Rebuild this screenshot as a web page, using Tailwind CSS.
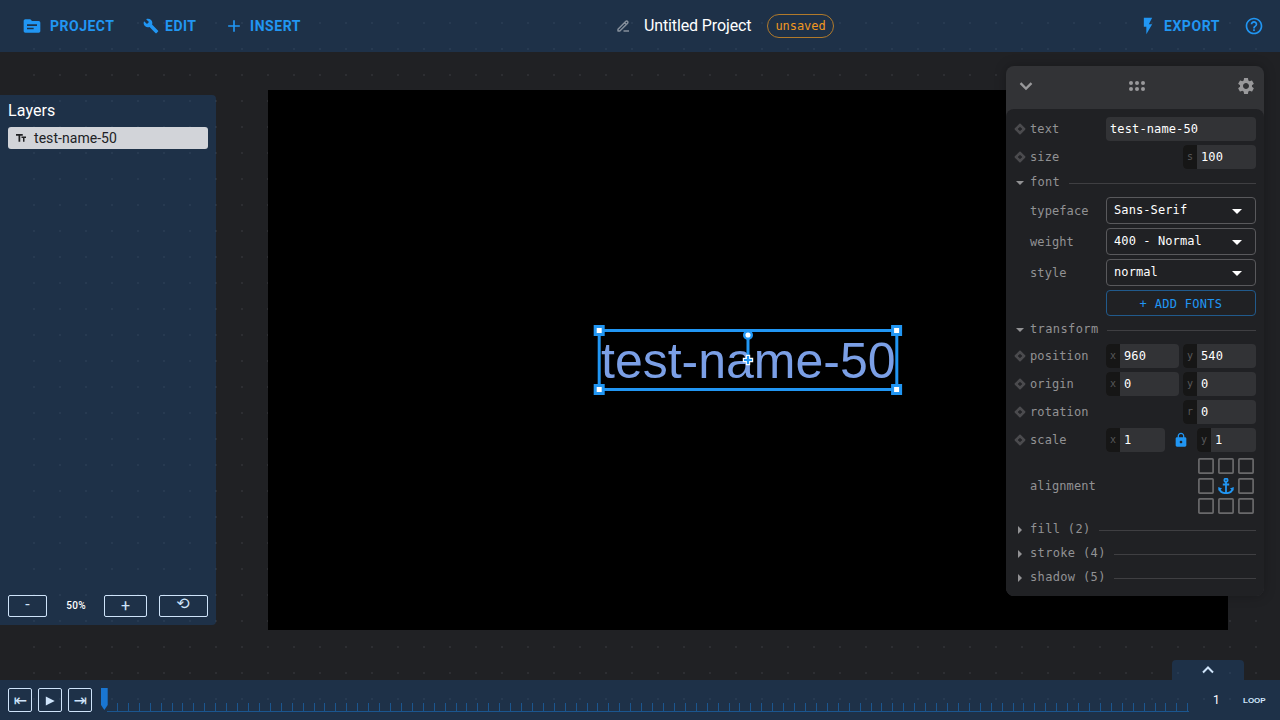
<!DOCTYPE html>
<html lang="en">
<head>
<meta charset="utf-8">
<title>Untitled Project</title>
<script src="https://cdn.jsdelivr.net/npm/@tailwindcss/browser@4"></script>
</head>
<body class="h-[720px] w-[1280px] overflow-hidden bg-[#202124] font-[Roboto,sans-serif] text-white">
<div class="relative flex h-full flex-col">
  <!-- dotted backdrop -->
  <svg class="pointer-events-none absolute inset-0" width="1280" height="720"><defs><pattern id="dots" x="33" y="22" width="26" height="26" patternUnits="userSpaceOnUse"><rect width="2" height="2" fill="#2d2e32"/></pattern></defs><rect x="30" y="0" width="1250" height="720" fill="url(#dots)"/></svg>
  <svg class="hidden">
    <symbol id="key" viewBox="0 0 12 12"><path d="M6 1.500L10.500 6 6 10.500 1.500 6z" fill="#4b4b4e" stroke="#4b4b4e" stroke-width="1.800" stroke-linejoin="round"/><path d="M6 4v4M4 6h4" stroke="#202124" stroke-width="1.300"/></symbol>
    <symbol id="slot" viewBox="0 0 16 16"><rect x=".9" y=".9" width="14.200" height="14.200" rx=".8" fill="none" stroke="#69696b" stroke-width="1.700"/></symbol>
  </svg>

  <header class="relative flex h-[52px] shrink-0 items-center bg-[rgba(26,86,156,0.3)] text-[14px] font-bold tracking-[0.5px] text-[#2196f3]">
    <div class="flex w-[616px] items-center pl-[22px]">
      <svg width="20" height="20" viewBox="0 0 24 24" fill="currentColor"><path d="M20 6h-8l-2-2H4c-1.1 0-1.99.9-1.99 2L2 18c0 1.1.9 2 2 2h16c1.1 0 2-.9 2-2V8c0-1.1-.9-2-2-2zm-6 10H6v-2h8v2zm4-4H6v-2h12v2z"/></svg>
      <span class="ml-2 w-[93px]">PROJECT</span>
      <svg width="16" height="16" viewBox="0 0 24 24" fill="currentColor"><path d="M22.7 19l-9.1-9.1c.9-2.3.4-5-1.5-6.9-2-2-5-2.4-7.4-1.3L9 6 6 9 1.6 4.7C.4 7.1.9 10.1 2.9 12.1c1.9 1.9 4.6 2.4 6.900 1.500l9.1 9.1c.4.4 1 .4 1.400 0l2.300-2.300c.5-.4.5-1.100.100-1.400z"/></svg>
      <span class="ml-[6px] w-[59px]">EDIT</span>
      <svg width="20" height="20" viewBox="0 0 24 24" fill="currentColor"><path d="M19 13h-6v6h-2v-6H5v-2h6V5h2v6h6v2z"/></svg>
      <span class="ml-[6px] tracking-[0.56px]">INSERT</span>
    </div>
    <div class="flex flex-1 items-center font-normal tracking-normal">
      <svg width="14" height="14" fill="none" stroke="#858f9b" stroke-width="1.500" stroke-linejoin="round"><path d="M2 12v-1.800L9.700 2.500c.6-.6 1.400-.6 1.900 0s.4 1.200 0 1.700L3.800 12zM8.500 3.700l1.900 1.900M7.500 12H13"/></svg>
      <span class="ml-[14px] text-[16px] tracking-[-0.12px] text-white">Untitled Project</span>
      <span class="ml-4 flex h-6 items-center rounded-full border border-[#b17a2b] px-[7px] font-['DejaVu_Sans_Mono',monospace] text-[12px] tracking-[-0.06px] text-[#f0981f]">unsaved</span>
    </div>
    <div class="flex items-center pr-4">
      <svg width="20" height="20" viewBox="0 0 24 24" fill="currentColor"><path d="M7 2v11h3v9l7-12h-4l4-8z"/></svg>
      <span class="ml-[6px] mr-6 tracking-[0.56px]">EXPORT</span>
      <svg width="20" height="20" viewBox="0 0 24 24" fill="currentColor"><path d="M11 18h2v-2h-2v2zm1-16C6.480 2 2 6.480 2 12s4.480 10 10 10 10-4.480 10-10S17.520 2 12 2zm0 18c-4.410 0-8-3.590-8-8s3.590-8 8-8 8 3.590 8 8-3.590 8-8 8zm0-14c-2.210 0-4 1.790-4 4h2c0-1.100.9-2 2-2s2 .9 2 2c0 2-3 1.750-3 5h2c0-2.250 3-2.500 3-5 0-2.210-1.790-4-4-4z"/></svg>
    </div>
  </header>

  <main class="relative flex flex-1">
    <aside class="mt-[43px] flex h-[530px] w-[216px] flex-col rounded-r-[4px] bg-[rgba(26,86,156,0.3)] px-2 pb-2 pt-[3px]">
      <h2 class="h-[29px] text-[16px] leading-[25px] tracking-[0.1px]">Layers</h2>
      <div class="flex h-[22px] items-center rounded-[3px] bg-[#d2d4d9] text-[14px] text-[#202124]">
        <svg class="mx-[7px]" width="12" height="12" viewBox="0 0 24 24" fill="currentColor"><path d="M2 4v3.500h5v12h3.500v-12h5V4H2zm20 5h-9v3h3v7.500h3V12h3V9z"/></svg>
        <span class="tracking-[0.05px]">test-name-50</span>
      </div>
      <div class="mt-auto flex h-[22px] items-stretch text-center text-[#cfe4fa]">
        <div class="w-[39px] rounded-[2px] border border-current text-[16px] leading-[17px]">-</div>
        <div class="w-[57px] pl-px text-[10px] font-medium leading-[22px] tracking-[0.3px] text-white">50%</div>
        <div class="w-[43px] rounded-[2px] border border-current text-[16px] leading-[20px]">+</div>
        <div class="ml-3 w-[49px] rounded-[2px] border border-current pr-px font-['DejaVu_Sans',sans-serif] text-[16px] leading-[16px]">⟲</div>
      </div>
    </aside>

    <section class="ml-[52px] mt-[38px] h-[540px] w-[960px] bg-black">
      <svg width="960" height="540" viewBox="268 90 960 540">
        <text x="601" y="378" font-family="Liberation Sans, Arial, sans-serif" font-size="50" fill="#7b9fe6">test-name-50</text>
        <g fill="none" stroke="#2196f3" stroke-width="3"><rect x="599.200" y="330.500" width="297.600" height="59"/><path d="M748 336V360"/></g>
        <g fill="#fff" stroke="#2196f3" stroke-width="3">
          <rect x="595.200" y="326.500" width="8" height="8"/><rect x="892.600" y="326.500" width="8" height="8"/>
          <rect x="595.200" y="385.500" width="8" height="8"/><rect x="892.600" y="385.500" width="8" height="8"/>
          <circle cx="748" cy="335" r="3.800" stroke-width="2.500"/>
        </g>
        <path d="M748 354.800v10.400M742.800 360h10.400" stroke="#fff" stroke-width="4.400"/>
        <path d="M748 356v8M744 360h8" stroke="#2196f3" stroke-width="2.200"/>
      </svg>
    </section>

    <!-- floating properties window -->
    <aside class="absolute left-[1006px] top-[14px] flex h-[530px] w-[258px] flex-col rounded-[8px] bg-[#323336] font-['DejaVu_Sans_Mono',monospace] text-[12px] text-[#929294] shadow-[0_0_12px_rgba(0,0,0,0.25)]">
      <div class="flex h-[43px] shrink-0 items-center justify-between px-[10px] pb-[3px] text-[#99999b]">
        <svg width="20" height="20" viewBox="0 0 24 24" fill="currentColor"><path d="M6.400 7.500L12 13.100l5.600-5.600 2 2L12 17.200 4.400 9.500z"/></svg>
        <svg class="ml-[2px]" width="18" height="12" viewBox="0 0 18 12" fill="currentColor"><circle cx="3" cy="3" r="2"/><circle cx="9" cy="3" r="2"/><circle cx="15" cy="3" r="2"/><circle cx="3" cy="9" r="2"/><circle cx="9" cy="9" r="2"/><circle cx="15" cy="9" r="2"/></svg>
        <svg class="-mr-[2px]" width="20" height="20" viewBox="0 0 24 24" fill="currentColor"><path d="M19.140 12.940c.04-.3.060-.61.060-.94 0-.32-.02-.64-.07-.94l2.030-1.580c.18-.14.230-.41.120-.61l-1.920-3.320c-.12-.22-.37-.29-.59-.22l-2.390.96c-.5-.38-1.030-.7-1.620-.94l-.36-2.540c-.04-.24-.24-.41-.48-.41h-3.840c-.24 0-.43.17-.47.41l-.36 2.540c-.59.24-1.130.57-1.620.94l-2.390-.96c-.22-.08-.47 0-.59.22L2.740 8.870c-.12.21-.08.47.12.61l2.030 1.580c-.05.3-.09.63-.09.94s.02.64.070.940l-2.030 1.580c-.18.140-.23.41-.12.610l1.920 3.320c.12.220.37.290.59.220l2.390-.96c.5.380 1.030.7 1.620.940l.36 2.540c.05.240.24.410.48.410h3.840c.24 0 .44-.17.470-.41l.36-2.540c.59-.24 1.130-.56 1.620-.94l2.390.96c.22.080.47 0 .59-.22l1.920-3.320c.12-.22.070-.47-.12-.61l-2.010-1.580zM12 15.600c-1.980 0-3.600-1.620-3.600-3.600s1.620-3.600 3.600-3.600 3.600 1.620 3.600 3.600-1.620 3.600-3.600 3.600z"/></svg>
      </div>
      <div class="flex flex-1 flex-col rounded-[8px] bg-[#202124] px-2 pt-2">
        <div class="flex h-6 items-center"><svg class="mr-1" width="12" height="12"><use href="#key"/></svg><span class="mr-auto tracking-[0.1px]">text</span>
          <div class="h-6 w-[150px] rounded-[4px] bg-[#323336] pl-1 leading-6 tracking-[0.12px] text-white">test-name-50</div></div>
        <div class="mt-1 flex h-6 items-center"><svg class="mr-1" width="12" height="12"><use href="#key"/></svg><span class="mr-auto tracking-[0.1px]">size</span>
          <div class="flex h-6 w-[73px] overflow-hidden rounded-[4px] bg-[#323336] leading-6 text-white"><i class="w-[14px] bg-[#161616] text-center text-[10px] not-italic text-[#59595b]">s</i><span class="pl-1 tracking-[0.1px]">100</span></div></div>
        <div class="mt-[2px] flex h-[22px] items-center tracking-[0.3px]"><svg class="mr-1 mt-[2px]" width="12" height="6"><path d="M2 1h8L6 5z" fill="#929294"/></svg>font<i class="ml-[9px] mt-[3px] h-px flex-1 bg-[#3f3f42]"></i></div>

        <div class="mt-1 flex h-[27px] items-center pl-4"><span class="mr-auto pt-px tracking-[0.1px]">typeface</span><div class="flex h-[27px] w-[150px] items-center justify-between rounded-[4px] border border-[#59595c] pl-[7px] pr-[13px] text-white"><span class="pb-px tracking-[0.1px]">Sans-Serif</span><svg width="10" height="5" class="mt-[2px]"><path d="M0 0h10L5 5z" fill="#fff"/></svg></div></div>
        <div class="mt-1 flex h-[27px] items-center pl-4"><span class="mr-auto pt-px tracking-[0.1px]">weight</span><div class="flex h-[27px] w-[150px] items-center justify-between rounded-[4px] border border-[#59595c] pl-[7px] pr-[13px] text-white"><span class="pb-px tracking-[0.1px]">400 - Normal</span><svg width="10" height="5" class="mt-[2px]"><path d="M0 0h10L5 5z" fill="#fff"/></svg></div></div>
        <div class="mt-1 flex h-[27px] items-center pl-4"><span class="mr-auto pt-px tracking-[0.1px]">style</span><div class="flex h-[27px] w-[150px] items-center justify-between rounded-[4px] border border-[#59595c] pl-[7px] pr-[13px] text-white"><span class="pb-px tracking-[0.1px]">normal</span><svg width="10" height="5" class="mt-[2px]"><path d="M0 0h10L5 5z" fill="#fff"/></svg></div></div>
        <div class="ml-auto mt-1 h-[26px] w-[150px] rounded-[4px] border border-[#215a8c] text-center leading-[26px] tracking-[0.3px] text-[#2196f3]">+ ADD FONTS</div>

        <div class="mt-[2px] flex h-[22px] items-center tracking-[0.4px]"><svg class="mr-1 mt-[2px]" width="12" height="6"><path d="M2 1h8L6 5z" fill="#929294"/></svg>transform<i class="ml-[8px] mt-[3px] h-px flex-1 bg-[#3f3f42]"></i></div>
        <div class="mt-1 flex h-6 items-center"><svg class="mr-1" width="12" height="12"><use href="#key"/></svg><span class="mr-auto tracking-[0.1px]">position</span>
          <div class="mr-1 flex h-6 w-[73px] overflow-hidden rounded-[4px] bg-[#323336] leading-6 text-white"><i class="w-[14px] bg-[#161616] text-center text-[10px] not-italic text-[#59595b]">x</i><span class="pl-1 tracking-[0.1px]">960</span></div>
          <div class="flex h-6 w-[73px] overflow-hidden rounded-[4px] bg-[#323336] leading-6 text-white"><i class="w-[14px] bg-[#161616] text-center text-[10px] not-italic text-[#59595b]">y</i><span class="pl-1 tracking-[0.1px]">540</span></div></div>
        <div class="mt-1 flex h-6 items-center"><svg class="mr-1" width="12" height="12"><use href="#key"/></svg><span class="mr-auto tracking-[0.1px]">origin</span>
          <div class="mr-1 flex h-6 w-[73px] overflow-hidden rounded-[4px] bg-[#323336] leading-6 text-white"><i class="w-[14px] bg-[#161616] text-center text-[10px] not-italic text-[#59595b]">x</i><span class="pl-1">0</span></div>
          <div class="flex h-6 w-[73px] overflow-hidden rounded-[4px] bg-[#323336] leading-6 text-white"><i class="w-[14px] bg-[#161616] text-center text-[10px] not-italic text-[#59595b]">y</i><span class="pl-1">0</span></div></div>
        <div class="mt-1 flex h-6 items-center"><svg class="mr-1" width="12" height="12"><use href="#key"/></svg><span class="mr-auto tracking-[0.1px]">rotation</span>
          <div class="flex h-6 w-[73px] overflow-hidden rounded-[4px] bg-[#323336] leading-6 text-white"><i class="w-[14px] bg-[#161616] text-center text-[10px] not-italic text-[#59595b]">r</i><span class="pl-1">0</span></div></div>
        <div class="mt-1 flex h-6 items-center"><svg class="mr-1" width="12" height="12"><use href="#key"/></svg><span class="mr-auto tracking-[0.1px]">scale</span>
          <div class="flex h-6 w-[59px] overflow-hidden rounded-[4px] bg-[#323336] leading-6 text-white"><i class="w-[14px] bg-[#161616] text-center text-[10px] not-italic text-[#59595b]">x</i><span class="pl-1">1</span></div>
          <svg class="mx-2" width="16" height="16" viewBox="0 0 24 24" fill="#2196f3"><path d="M18 8h-1V6c0-2.760-2.240-5-5-5S7 3.240 7 6v2H6c-1.100 0-2 .9-2 2v10c0 1.100.9 2 2 2h12c1.100 0 2-.9 2-2V10c0-1.100-.9-2-2-2zm-6 9c-1.100 0-2-.9-2-2s.9-2 2-2 2 .9 2 2-.9 2-2 2zm3.100-9H8.900V6c0-1.710 1.390-3.100 3.100-3.100s3.100 1.390 3.100 3.100v2z"/></svg>
          <div class="flex h-6 w-[59px] overflow-hidden rounded-[4px] bg-[#323336] leading-6 text-white"><i class="w-[14px] bg-[#161616] text-center text-[10px] not-italic text-[#59595b]">y</i><span class="pl-1">1</span></div></div>

        <div class="mt-1 flex h-[60px] items-center justify-between pl-4"><span class="tracking-[0.1px]">alignment</span>
          <div class="grid grid-cols-3 gap-1 pr-[2px]">
            <svg width="16" height="16"><use href="#slot"/></svg><svg width="16" height="16"><use href="#slot"/></svg><svg width="16" height="16"><use href="#slot"/></svg>
            <svg width="16" height="16"><use href="#slot"/></svg>
            <svg width="16" height="16" viewBox="0 0 16 16" fill="none" stroke="#2196f3" stroke-width="1.800"><circle cx="8" cy="2.200" r="1.600"/><path d="M8 3.800V15M4.800 6.500h6.400M1.300 10.500C2 13.500 4.700 15.200 8 15.200s6-1.700 6.700-4.700"/><path d="M.2 9l3.900 1.600L.6 12.800zM15.800 9l-3.900 1.600 3.500 2.200z" fill="#2196f3" stroke="none"/></svg>
            <svg width="16" height="16"><use href="#slot"/></svg>
            <svg width="16" height="16"><use href="#slot"/></svg><svg width="16" height="16"><use href="#slot"/></svg><svg width="16" height="16"><use href="#slot"/></svg>
          </div></div>
        <div class="mt-px flex h-6 items-center tracking-[0.35px]"><svg class="mr-1 mt-[2px]" width="12" height="8"><path d="M4 0l4 4-4 4z" fill="#929294"/></svg>fill (2)<i class="ml-[8px] mt-[3px] h-px flex-1 bg-[#3f3f42]"></i></div>
        <div class="flex h-6 items-center tracking-[0.35px]"><svg class="mr-1 mt-[2px]" width="12" height="8"><path d="M4 0l4 4-4 4z" fill="#929294"/></svg>stroke (4)<i class="ml-[8px] mt-[3px] h-px flex-1 bg-[#3f3f42]"></i></div>
        <div class="flex h-6 items-center tracking-[0.35px]"><svg class="mr-1 mt-[2px]" width="12" height="8"><path d="M4 0l4 4-4 4z" fill="#929294"/></svg>shadow (5)<i class="ml-[8px] mt-[3px] h-px flex-1 bg-[#3f3f42]"></i></div>
      </div>
    </aside>

    <div class="absolute bottom-0 left-[1172px] flex h-5 w-[72px] items-center justify-center rounded-t-[4px] bg-[rgba(26,86,156,0.3)]">
      <svg width="12" height="8" fill="none" stroke="#cfe4fa" stroke-width="2"><path d="M1 6.500L6 1.500l5 5"/></svg>
    </div>
  </main>

  <footer class="relative flex h-10 shrink-0 items-center bg-[rgba(26,86,156,0.3)] pl-2 text-[#cfe4fa]">
    <div class="flex gap-[6px] font-['DejaVu_Sans',sans-serif] text-[16px] leading-[24px]">
      <div class="size-6 rounded-[2px] border border-current pl-px text-center">⇤</div>
      <div class="flex size-6 items-center justify-center rounded-[2px] border border-current pt-px"><svg width="10" height="10" fill="currentColor"><path d="M.8.400L9.700 5 .8 9.600z"/></svg></div>
      <div class="size-6 rounded-[2px] border border-current pl-px text-center">⇥</div>
    </div>
    <div class="relative ml-[15px] mt-[15px] h-[9px] w-[1082px]">
      <div id="ticks" class="flex h-[9px] border-b border-[#1b568f]"></div>
      <svg class="absolute -left-[6px] -top-[15px]" width="7" height="22"><path d="M0 0h6.700v17L3.350 22 0 17z" fill="#1976d2"/></svg>
    </div>
    <span class="ml-6 w-[30px] text-[12px] text-white">1</span>
    <span class="pt-px font-['Liberation_Sans',sans-serif] text-[8px] font-bold">LOOP</span>
  </footer>
</div>
<script>
  document.getElementById('ticks').innerHTML = '<i class="flex-1 border-r border-[#1b568f]"></i>'.repeat(99);
</script>
</body>
</html>
